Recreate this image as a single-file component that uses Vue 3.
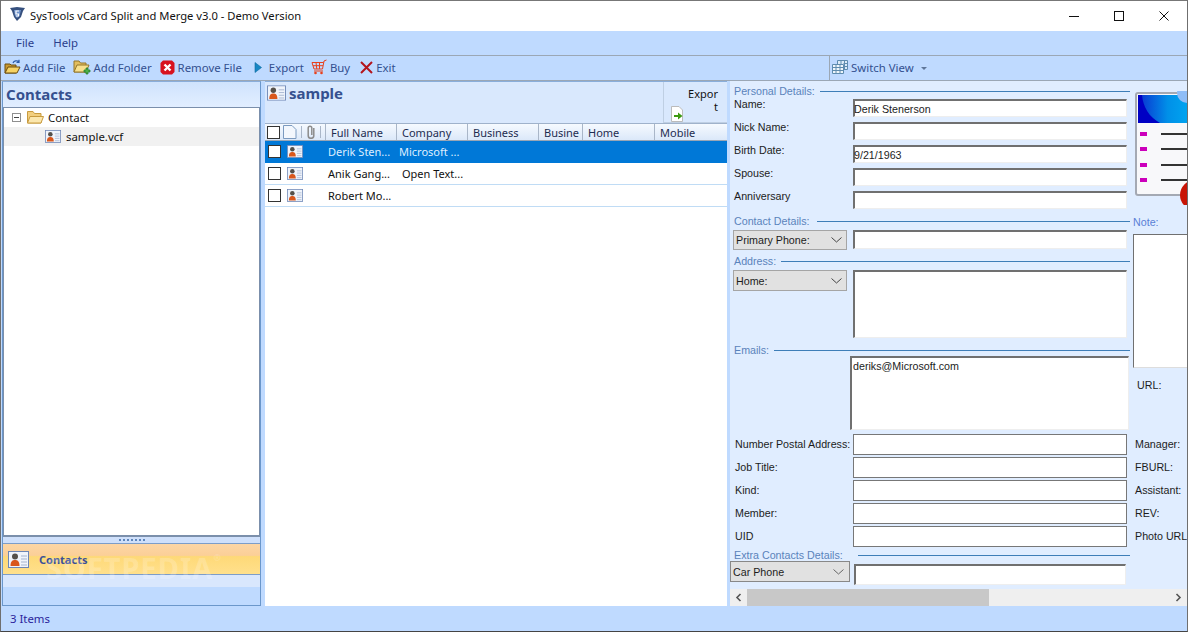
<script setup>
const toolbarItems = [
  { label: 'Add File', icon: 'open' },
  { label: 'Add Folder', icon: 'folder' },
  { label: 'Remove File', icon: 'remove' },
  { label: 'Export', icon: 'export' },
  { label: 'Buy', icon: 'cart' },
  { label: 'Exit', icon: 'exit' }
]

const columns = [
  { label: 'Full Name', width: 71 },
  { label: 'Company', width: 71 },
  { label: 'Business', width: 71 },
  { label: 'Busine', width: 44 },
  { label: 'Home', width: 72 },
  { label: 'Mobile', width: 72 }
]

const contacts = [
  { name: 'Derik Sten...', company: 'Microsoft ...', indent: false },
  { name: 'Anik Gang...', company: 'Open Text...', indent: true },
  { name: 'Robert Mo...', company: '', indent: false }
]

const personal = [
  { label: 'Name:', value: 'Derik Stenerson' },
  { label: 'Nick Name:', value: '' },
  { label: 'Birth Date:', value: '9/21/1963' },
  { label: 'Spouse:', value: '' },
  { label: 'Anniversary', value: '' }
]

const extraRows = ['Number Postal Address:', 'Job Title:', 'Kind:', 'Member:', 'UID']
const sideRows = ['Manager:', 'FBURL:', 'Assistant:', 'REV:', 'Photo URL']
</script>

<template>
  <div class="window">
    <header class="titlebar">
      <svg class="logo" width="17" height="16" viewBox="0 0 17 16">
        <path d="M1 2 L8 1 L16 2 L14 5 L12 11 L8 15 L5 11 L3 5 Z" fill="#36507e" />
        <path d="M5 4 H12 L10.5 10 L8 12 L6 10 Z" fill="#6f93cc" />
        <path d="M10 5 H7 V8 H9.5 V10 H7" fill="none" stroke="#fff" stroke-width="1.2" />
      </svg>
      <span class="title">SysTools vCard Split and Merge v3.0 - Demo Version</span>
      <div class="winbtns">
        <svg width="12" height="12" viewBox="0 0 12 12"><path d="M1 6.5 H11" stroke="#111" fill="none" /></svg>
        <svg width="12" height="12" viewBox="0 0 12 12"><rect x="1.5" y="1.5" width="9" height="9" stroke="#111" fill="none" /></svg>
        <svg width="12" height="12" viewBox="0 0 12 12"><path d="M1.5 1.5 L10.5 10.5 M10.5 1.5 L1.5 10.5" stroke="#111" fill="none" /></svg>
      </div>
    </header>

    <nav class="menubar">
      <span>File</span>
      <span>Help</span>
    </nav>

    <div class="toolbar">
      <div class="tools">
        <div v-for="item in toolbarItems" :key="item.label" class="tool" :class="'tool-' + item.icon">
          <svg v-if="item.icon === 'open'" width="17" height="16" viewBox="0 0 17 16">
            <path d="M1 14 V5 H6 L7 6 H12 V14 Z" fill="#c9982f" stroke="#6d4e10" />
            <path d="M1 14 L4 8 H16 L13 14 Z" fill="#f6d365" stroke="#6d4e10" />
            <path d="M9 4 C10 1.5 13 1 15 3 M15 0.8 V3.4 H12.5" fill="none" stroke="#2a5aa8" stroke-width="1.2" />
          </svg>
          <svg v-else-if="item.icon === 'folder'" width="18" height="17" viewBox="0 0 18 17">
            <path d="M1 13 V2 H6 L7.5 4 H13 V13 Z" fill="#e2bd5e" stroke="#94772a" />
            <path d="M1 13 L4 6 H16 L13 13 Z" fill="#f8e08d" stroke="#94772a" />
            <path d="M13 9 H15 V11 H17 V13 H15 V15 H13 V13 H11 V11 H13 Z" fill="#4db04a" stroke="#1f7a28" stroke-width=".7" />
          </svg>
          <svg v-else-if="item.icon === 'remove'" width="15" height="15" viewBox="0 0 15 15">
            <path d="M3 0.5 H12 L14.5 3 V12 L12 14.5 H3 L0.5 12 V3 Z" fill="#d8121e" />
            <path d="M4.5 4.5 L10.5 10.5 M10.5 4.5 L4.5 10.5" stroke="#fff" stroke-width="2.4" />
          </svg>
          <svg v-else-if="item.icon === 'export'" width="9" height="11" viewBox="0 0 9 11">
            <path d="M1 0.5 L7.5 5.5 L1 10.5 Z" fill="#1787c4" stroke="#0d6a9e" stroke-width=".6" />
          </svg>
          <svg v-else-if="item.icon === 'cart'" width="16" height="16" viewBox="0 0 16 16">
            <path d="M15.5 1 L13 2 L11.5 10 H3 L1 3.5 H12.5 M2 6.7 H12 M5 3.5 L5.8 10 M8.5 3.5 V10" fill="none" stroke="#e8401c" />
            <path d="M3 12 H12" stroke="#e8401c" />
            <circle cx="4.5" cy="14" r="1.3" fill="#e8401c" />
            <circle cx="10.5" cy="14" r="1.3" fill="#e8401c" />
          </svg>
          <svg v-else width="13" height="13" viewBox="0 0 13 13">
            <path d="M1 1 L12 12 M12 1 L1 12" stroke="#b3141c" stroke-width="2" />
          </svg>
          <span>{{ item.label }}</span>
        </div>
      </div>
      <div class="switch">
        <svg width="16" height="14" viewBox="0 0 16 14">
          <path d="M5.5 .5 H15.5 V9.5 H5.5 Z" fill="#dcebf7" stroke="#5f8caf" />
          <path d="M.5 4.5 H11.5 V13.5 H.5 Z" fill="#eef6fb" stroke="#5f8caf" />
          <path d="M.5 7.5 H11.5 M.5 10.5 H11.5 M4 4.5 V13.5 M8 4.5 V13.5 M9 .5 V4.5 M12.5 .5 V9.5 M11.5 3.5 H15.5 M11.5 6.5 H15.5" stroke="#5f8caf" fill="none" />
        </svg>
        <span>Switch View</span>
        <i class="caret"></i>
      </div>
    </div>

    <main class="main">
      <aside class="left">
        <h2 class="left-head">Contacts</h2>
        <div class="tree">
          <div class="tree-row">
            <span class="expander"></span>
            <svg width="17" height="13" viewBox="0 0 17 13">
              <path d="M.5 12 V.5 H6 L7.5 2.5 H14 V12 Z" fill="#f2cf7f" stroke="#c89b3f" />
              <path d="M.5 12 L3 5.5 H16.5 L14 12 Z" fill="#fbe7ae" stroke="#c89b3f" />
            </svg>
            <span>Contact</span>
          </div>
          <div class="tree-row tree-file">
            <svg width="16" height="13" viewBox="0 0 21 17">
              <use href="#vcard" />
            </svg>
            <span>sample.vcf</span>
          </div>
        </div>
        <div class="splitter"><i v-for="n in 7" :key="n"></i></div>
        <div class="nav-btn">
          <svg width="21" height="17" viewBox="0 0 21 17"><use href="#vcard" /></svg>
          <span>Contacts</span>
          <em class="watermark">SOFTPEDIA<sup>®</sup></em>
        </div>
        <div class="nav-rest"></div>
        <div class="nav-foot"></div>
      </aside>

      <section class="middle">
        <div class="mid-head">
          <div class="mid-title">
            <svg width="19" height="16" viewBox="0 0 21 17"><use href="#vcard" /></svg>
            <span>sample</span>
          </div>
          <div class="export-btn">
            <span>Expor<br />t</span>
            <svg width="13" height="16" viewBox="0 0 13 16">
              <path d="M.5 .5 H8 L11.5 4 V15.5 H.5 Z" fill="#fff" stroke="#bbb" />
              <path d="M3 9 H7 V6.5 L11.5 10 L7 13.5 V11 H3 Z" fill="#3c9a12" />
            </svg>
          </div>
        </div>

        <div class="grid-head">
          <div class="head-icons">
            <i class="check"></i>
            <svg width="14" height="14" viewBox="0 0 14 14">
              <path d="M.5 .5 H9 L13 4.5 V13.5 H.5 Z" fill="#f3f7fd" stroke="#7b9ac0" />
            </svg>
            <i class="sep"></i>
            <svg width="10" height="14" viewBox="0 0 10 14">
              <path d="M7.8 3 V10.5 A2.8 2.8 0 0 1 2.2 10.5 V3 A1.8 1.8 0 0 1 5.8 3 V10" fill="none" stroke="#8c8c8c" stroke-width="1.5" />
            </svg>
            <i class="sep"></i>
          </div>
          <div v-for="col in columns" :key="col.label" class="col" :style="{ width: col.width + 'px' }">{{ col.label }}</div>
        </div>

        <div v-for="(c, i) in contacts" :key="c.name" class="row" :class="{ selected: i === 0 }">
          <i class="check"></i>
          <svg width="16" height="13" viewBox="0 0 21 17"><use href="#vcard" /></svg>
          <span class="cell-name">{{ c.name }}</span>
          <span class="cell-company" :class="{ indent: c.indent }">{{ c.company }}</span>
        </div>
      </section>

      <section class="right">
        <div class="form-col">
          <div class="legend legend-first"><span>Personal Details:</span><i></i></div>
          <div v-for="p in personal" :key="p.label" class="field">
            <label>{{ p.label }}</label>
            <div class="input sunken">{{ p.value }}</div>
          </div>

          <div class="legend legend-contact"><span>Contact Details:</span><i></i></div>
          <div class="field select-row">
            <div class="select">Primary Phone:<svg width="11" height="6" viewBox="0 0 11 6"><path d="M.5 .5 L5.5 5 L10.5 .5" fill="none" stroke="#444" /></svg></div>
            <div class="input sunken"></div>
          </div>

          <div class="legend legend-address"><span>Address:</span><i></i></div>
          <div class="field select-row tall">
            <div class="select">Home:<svg width="11" height="6" viewBox="0 0 11 6"><path d="M.5 .5 L5.5 5 L10.5 .5" fill="none" stroke="#444" /></svg></div>
            <div class="input sunken area"></div>
          </div>

          <div class="legend legend-emails"><span>Emails:</span><i></i></div>
          <div class="emails sunken">deriks@Microsoft.com</div>

          <div v-for="label in extraRows" :key="label" class="field plain">
            <label>{{ label }}</label>
            <div class="input flat"></div>
          </div>

          <div class="legend legend-extra"><span>Extra Contacts Details:</span><i></i></div>
          <div class="extra-row">
            <div class="select wide">Car Phone<svg width="11" height="6" viewBox="0 0 11 6"><path d="M.5 .5 L5.5 5 L10.5 .5" fill="none" stroke="#666" /></svg></div>
            <div class="input sunken"></div>
          </div>
        </div>

        <div class="side-col">
          <svg class="big-icon" width="54" height="114" viewBox="0 0 54 114">
            <defs>
              <linearGradient id="cardTop" x1="0" y1="0" x2="1" y2="0">
                <stop offset="0" stop-color="#0a2fd0" />
                <stop offset=".45" stop-color="#0090e8" />
                <stop offset="1" stop-color="#00b4f5" />
              </linearGradient>
            </defs>
            <rect x="3" y="2" width="70" height="102" rx="2" fill="#f8f8fa" stroke="#a4a9b3" stroke-width="2" />
            <rect x="5" y="4" width="66" height="28" fill="url(#cardTop)" />
            <path d="M5 4 H9 C10 16 16 26 27 32 H5 Z" fill="#0000c4" />
            <circle cx="54" cy="2" r="10" fill="#8fbdf7" />
            <g fill="#cc00bb">
              <rect x="7" y="41" width="7" height="4" />
              <rect x="7" y="56" width="7" height="4" />
              <rect x="7" y="72" width="7" height="4" />
              <rect x="7" y="87" width="7" height="4" />
            </g>
            <path d="M28 43 H54 M28 58 H54 M28 74 H54 M28 89 H54" stroke="#333" stroke-width="2" />
            <circle cx="62" cy="104" r="15" fill="#c81405" />
          </svg>
          <div class="note-label">Note:</div>
          <div class="note-box"></div>
          <div class="url-label">URL:</div>
          <div v-for="label in sideRows" :key="label" class="side-row">{{ label }}</div>
        </div>

        <div class="hscroll">
          <svg width="7" height="9" viewBox="0 0 7 9"><path d="M5.5 1 L2 4.5 L5.5 8" fill="none" stroke="#555" stroke-width="1.6" /></svg>
          <div class="track"><div class="thumb"></div></div>
          <svg width="7" height="9" viewBox="0 0 7 9"><path d="M1.5 1 L5 4.5 L1.5 8" fill="none" stroke="#555" stroke-width="1.6" /></svg>
        </div>
      </section>
    </main>

    <footer class="statusbar">3 Items</footer>

    <svg width="0" height="0" class="defs">
      <symbol id="vcard" viewBox="0 0 21 17">
        <rect x=".5" y=".5" width="20" height="16" fill="#f0f4fb" stroke="#6d86b5" />
        <path d="M13 5 H19 M13 8 H19 M13 11 H19 M13 14 H19" stroke="#a5b4cf" />
        <circle cx="7" cy="5.5" r="3" fill="#55504a" />
        <path d="M2.5 15 C2.5 10 4.5 9 7 9 C9.5 9 11.5 10 11.5 15 Z" fill="#d9571c" />
      </symbol>
    </svg>
  </div>
</template>

<style>
html, body {
  margin: 0;
  overflow: hidden;
}
</style>

<style scoped>
.window {
  width: 1188px;
  height: 632px;
  display: flex;
  flex-direction: column;
  background: #bfdaff;
  font-family: "Noto Sans", "Open Sans", sans-serif;
  font-size: 11.4px;
  color: #111;
  overflow: hidden;
  position: relative;
  box-sizing: border-box;
  border: 1px solid #6f6f6f;
  border-top: 0;
  border-bottom-color: #444;
}

.defs {
  position: absolute;
}

.titlebar {
  height: 31px;
  flex: none;
  background: #fff;
  display: flex;
  align-items: center;
  padding: 0 0 1px 8px;
  border-top: 1px solid #777;
  box-sizing: border-box;
}

.logo {
  margin-right: 4px;
  margin-top: -3px;
}

.title {
  font-size: 11.2px;
}

.winbtns {
  margin-left: auto;
  display: flex;
  gap: 33px;
  padding-right: 17px;
}

.menubar {
  height: 24px;
  flex: none;
  display: flex;
  align-items: center;
  gap: 19px;
  padding: 0 0 2px 15px;
  box-sizing: border-box;
  color: #2b3f8c;
}

.toolbar {
  height: 26px;
  flex: none;
  display: flex;
  box-sizing: border-box;
  border-top: 1px solid #9ba7b5;
  border-bottom: 1px solid #9ba7b5;
  color: #33508f;
}

.tools {
  width: 829px;
  display: flex;
  align-items: center;
  padding: 0 0 2px 3px;
  box-sizing: border-box;
  border-right: 1px solid #9ba7b5;
}

.tool {
  display: flex;
  align-items: center;
  gap: 3px;
  margin-right: 8px;
}

.tool-open {
  gap: 2px;
}

.tool-folder {
  gap: 2px;
}

.tool-export {
  gap: 6px;
  margin-left: 4px;
  margin-right: 7px;
}

.tool-cart {
  margin-right: 10px;
}

.switch {
  display: flex;
  align-items: center;
  gap: 3px;
  padding: 0 0 2px 2px;
}

.caret {
  width: 0;
  height: 0;
  margin-left: 4px;
  margin-top: 2px;
  border-left: 3px solid transparent;
  border-right: 3px solid transparent;
  border-top: 3px solid #5f7699;
}

.main {
  flex: 1;
  display: flex;
  min-height: 0;
}

.left {
  width: 259px;
  margin-left: 1px;
  flex: none;
  display: flex;
  flex-direction: column;
  box-sizing: border-box;
  border: 1px solid #6b97cb;
  border-top-color: #8aaedb;
}

.left-head {
  height: 25px;
  flex: none;
  margin: 0;
  padding-left: 3px;
  box-sizing: border-box;
  font-size: 15px;
  line-height: 25px;
  font-weight: 700;
  color: #35508f;
  background: linear-gradient(#cfe3fd, #e2eeff);
}

.tree {
  flex: 1;
  background: #fff;
  border-style: solid;
  border-width: 1px 1px 2px 1px;
  border-color: #7b8fab;
}

.tree-row {
  height: 19px;
  display: flex;
  align-items: center;
  gap: 4px;
  padding-left: 8px;
}

.expander {
  width: 7px;
  height: 7px;
  border: 1px solid #8f8f8f;
  background: linear-gradient(90deg, transparent 1px, #444 1px, #444 6px, transparent 6px) center / 100% 1px no-repeat;
  margin-right: 2px;
}

.tree-file {
  background: #f1f1f1;
  padding-left: 41px;
  gap: 5px;
}

.splitter {
  height: 6px;
  flex: none;
  display: flex;
  align-items: center;
  justify-content: center;
  gap: 2px;
  background: #cfe0fb;
  border-bottom: 1px solid #7d9dc8;
}

.splitter i {
  width: 2px;
  height: 2px;
  background: #5f86bb;
}

.nav-btn {
  height: 31px;
  flex: none;
  display: flex;
  align-items: center;
  position: relative;
  gap: 10px;
  padding-left: 5px;
  box-sizing: border-box;
  border-bottom: 1px solid #7d9dc8;
  background: linear-gradient(#fdd6a4 0%, #fbcf98 38%, #fed978 42%, #ffe08c 100%);
  font-weight: 700;
  font-size: 11px;
  color: #3a4f99;
}

.watermark {
  position: absolute;
  left: 43px;
  top: 9px;
  font-style: normal;
  font-weight: 700;
  font-size: 29px;
  letter-spacing: 1px;
  line-height: 30px;
  color: rgba(255, 255, 255, .2);
}

.watermark sup {
  font-size: 9px;
  vertical-align: 18px;
  line-height: 0;
}

.nav-rest {
  height: 12px;
  flex: none;
  background: #d9e7fd;
}

.nav-foot {
  height: 18px;
  flex: none;
  background: #bfdaff;
}

.middle {
  width: 462px;
  margin-left: 4px;
  flex: none;
  background: #fff;
  border-top: 1px solid #8aaedb;
}

.mid-head {
  height: 41px;
  display: flex;
  justify-content: space-between;
  background: #d9e8fd;
  box-sizing: border-box;
}

.mid-title {
  display: flex;
  align-items: center;
  align-self: flex-start;
  gap: 3px;
  padding: 1px 0 0 2px;
  font-size: 15px;
  font-weight: 700;
  color: #35508f;
}

.export-btn {
  width: 64px;
  height: 41px;
  box-sizing: border-box;
  border-left: 1px solid #bfcfe3;
  border-bottom: 1px solid #bfcfe3;
  position: relative;
  text-align: right;
  padding: 5px 9px 0 0;
  line-height: 13px;
  font-size: 11px;
}

.export-btn svg {
  position: absolute;
  left: 7px;
  bottom: 0;
}

.grid-head {
  height: 18px;
  display: flex;
  box-sizing: border-box;
  border-top: 1px solid #9fb2cb;
  border-bottom: 1px solid #9aa6b5;
  background: linear-gradient(#f6faff, #dbe8f9);
  font-size: 11px;
  color: #1d2c50;
}

.head-icons {
  width: 60px;
  flex: none;
  display: flex;
  align-items: center;
  gap: 3px;
  padding-left: 2px;
  box-sizing: border-box;
}

.sep {
  width: 1px;
  height: 12px;
  background: #a9b6c8;
  margin: 0 1px;
}

.col {
  flex: none;
  box-sizing: border-box;
  padding-left: 5px;
  line-height: 17px;
  border-left: 1px solid #a9b6c8;
  white-space: nowrap;
  overflow: hidden;
}

.check {
  width: 11px;
  height: 11px;
  flex: none;
  background: #fff;
  border: 1px solid #333;
  display: block;
}

.row {
  height: 22px;
  display: flex;
  align-items: center;
  box-sizing: border-box;
  padding-left: 3px;
  border-bottom: 1px solid #c0dcf5;
  font-size: 11px;
  color: #111;
}

.row svg {
  margin-left: 6px;
}

.row.selected {
  background: #0078d7;
  color: #dfeeff;
  border-bottom-color: #0078d7;
}

.cell-name {
  margin-left: 25px;
  width: 71px;
  white-space: nowrap;
}

.cell-company {
  white-space: nowrap;
}

.cell-company.indent {
  margin-left: 3px;
}

.right {
  width: 457px;
  margin-left: 3px;
  flex: none;
  background: #e0edff;
  display: grid;
  grid-template-columns: 400px 57px;
  grid-template-rows: 1fr 17px;
  overflow: hidden;
  font-family: "Liberation Sans", Arial, sans-serif;
  font-size: 10.7px;
  color: #1c1c1c;
}

.form-col {
  min-width: 0;
}

.legend {
  display: flex;
  align-items: center;
  height: 12px;
  color: #5a83bb;
  padding-left: 4px;
}

.legend i {
  flex: 1;
  height: 1px;
  background: #3e7eb8;
  margin-left: 5px;
}

.legend-first {
  margin-top: 4px;
}

.legend-contact {
  margin-top: 3px;
}

.legend-address {
  margin-top: 5px;
}

.legend-emails {
  margin-top: 6px;
}

.legend-contact i {
  margin-left: 8px;
}

.legend-extra i {
  margin-left: 15px;
}

.field {
  display: flex;
  height: 23px;
  padding-left: 4px;
  box-sizing: border-box;
}

.field label {
  width: 119px;
  flex: none;
  line-height: 15px;
  white-space: nowrap;
}

.input {
  width: 274px;
  height: 18px;
  margin-top: 2px;
  box-sizing: border-box;
  background: #fff;
  line-height: 16px;
  text-indent: -1px;
  flex: none;
}

.sunken {
  border: 1px solid #eee;
  border-top: 2px solid #707070;
  border-left: 2px solid #707070;
}

.flat {
  border: 1px solid #777;
  height: 21px;
  margin-top: 0;
}

.plain label {
  line-height: 20px;
  padding-left: 1px;
  width: 118px;
}

.select-row {
  height: auto;
  gap: 6px;
  padding-left: 3px;
  margin-top: 3px;
}

.select {
  width: 114px;
  height: 20px;
  flex: none;
  box-sizing: border-box;
  background: #e1e1e1;
  border: 1px solid #a5a5a5;
  display: flex;
  align-items: center;
  justify-content: space-between;
  padding: 0 4px 0 2px;
}

.select-row .input {
  height: 19px;
  margin-top: 0;
}

.tall .select {
  height: 21px;
}

.tall .input.area {
  height: 68px;
}

.emails {
  margin: 0 1px 4px 120px;
  width: 279px;
  height: 74px;
  box-sizing: border-box;
  background: #fff;
  padding: 0 1px;
  line-height: 16px;
}

.extra-row {
  display: flex;
  align-items: flex-start;
  gap: 4px;
}

.select.wide {
  width: 120px;
  height: 21px;
  padding: 0 5px 0 2px;
  border-color: #888;
}

.extra-row .input {
  width: 272px;
  height: 21px;
  margin-top: 3px;
}

.side-col {
  min-width: 0;
  padding-left: 3px;
  overflow: hidden;
}

.big-icon {
  display: block;
  margin-top: 10px;
}

.note-label {
  margin-top: 11px;
  color: #5a7fd6;
  line-height: 13px;
}

.note-box {
  height: 134px;
  margin-top: 5px;
  background: #fff;
  box-sizing: border-box;
  border-top: 1px solid #707070;
  border-left: 1px solid #707070;
  border-bottom: 1px solid #ddd;
}

.url-label {
  margin: 10px 0 0 4px;
  line-height: 14px;
  height: 59px;
}

.side-row {
  height: 23px;
  line-height: 15px;
  padding-left: 2px;
  white-space: nowrap;
}

.hscroll {
  grid-column: 1 / 3;
  display: flex;
  align-items: center;
  background: #efefef;
  padding: 0 5px;
}

.track {
  flex: 1;
  align-self: stretch;
  margin: 0 6px 0 5px;
}

.thumb {
  width: 242px;
  height: 100%;
  background: #c8c8c8;
}

.statusbar {
  height: 25px;
  flex: none;
  line-height: 25px;
  padding-left: 9px;
  color: #2b1f9c;
  background: #bfdaff;
}
</style>
